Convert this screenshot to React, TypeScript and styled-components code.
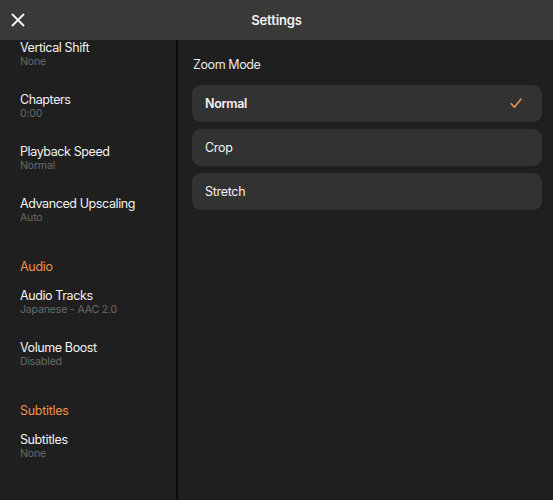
import * as React from 'react'
import styled, { createGlobalStyle } from 'styled-components'

const accent = '#ec9149'

const GlobalStyle = createGlobalStyle`
  html, body {
    margin: 0;
    padding: 0;
    background: #1f1f1f;
  }
  body {
    font-family: Inter, "Noto Sans", sans-serif;
    -webkit-font-smoothing: antialiased;
  }
`

const Window = styled.div`
  width: 553px;
  height: 500px;
  display: flex;
  flex-direction: column;
  background: #1f1f1f;
  overflow: hidden;
`

const Header = styled.header`
  height: 40px;
  flex: 0 0 40px;
  display: grid;
  grid-template-columns: 40px 1fr 40px;
  align-items: center;
  background: #3a3938;
`

const CloseButton = styled.button`
  width: 36px;
  height: 40px;
  display: flex;
  align-items: center;
  justify-content: center;
  padding: 0;
  border: none;
  background: none;
  color: #f2f2f2;
`

const Title = styled.h1`
  margin: 0;
  text-align: center;
  font-size: 13px;
  font-weight: 600;
  letter-spacing: -0.1px;
  color: #f4f4f4;
`

const Body = styled.div`
  flex: 1;
  display: grid;
  grid-template-columns: 176px 2px 1fr;
`

const Sidebar = styled.nav`
  display: flex;
  flex-direction: column;
  padding-left: 20px;
`

const Divider = styled.div`
  background: #0c0c0c;
`

const Item = styled.div`
  padding-bottom: 24px;
`

const ItemLabel = styled.div`
  font-size: 12.5px;
  line-height: 15px;
  letter-spacing: -0.4px;
  color: #f2f2f2;
`

const ItemValue = styled.div`
  font-size: 10.5px;
  line-height: 13px;
  letter-spacing: -0.15px;
  color: #6a6a6a;
`

const SectionHeader = styled.div`
  margin: 11px 0 14px;
  font-size: 12.5px;
  line-height: 15px;
  letter-spacing: -0.3px;
  color: ${accent};
`

const Panel = styled.section`
  padding: 17px 11px 0 14px;
  display: flex;
  flex-direction: column;
`

const PanelTitle = styled.div`
  font-size: 12.5px;
  line-height: 16px;
  letter-spacing: -0.4px;
  color: #e8e8e8;
  padding-left: 1px;
  margin-bottom: 12px;
`

const Options = styled.div`
  display: flex;
  flex-direction: column;
  gap: 7px;
`

const Option = styled.div<{ $selected?: boolean }>`
  height: 37px;
  display: flex;
  align-items: center;
  justify-content: space-between;
  padding: 0 20px 0 13px;
  border-radius: 9px;
  background: #323232;
  font-size: 12.5px;
  letter-spacing: -0.3px;
  font-weight: ${p => (p.$selected ? 600 : 400)};
  color: #f2f2f2;
`

const sections = [
  {
    header: null,
    items: [
      ['Vertical Shift', 'None'],
      ['Chapters', '0:00'],
      ['Playback Speed', 'Normal'],
      ['Advanced Upscaling', 'Auto'],
    ],
  },
  {
    header: 'Audio',
    items: [
      ['Audio Tracks', 'Japanese - AAC 2.0'],
      ['Volume Boost', 'Disabled'],
    ],
  },
  {
    header: 'Subtitles',
    items: [['Subtitles', 'None']],
  },
]

const modes = ['Normal', 'Crop', 'Stretch']

const CloseIcon = () => (
  <svg width="14" height="14" viewBox="0 0 14 14">
    <path d="M1.5 1.5 12.5 12.5 M12.5 1.5 1.5 12.5" stroke="currentColor" strokeWidth="2" strokeLinecap="round" />
  </svg>
)

const CheckIcon = () => (
  <svg width="12" height="11" viewBox="0 0 12 11">
    <path d="M1.2 5.8 4.4 9.3 10.8 1.2" stroke={accent} strokeWidth="1.7" fill="none" strokeLinecap="round" strokeLinejoin="round" />
  </svg>
)

export default function App() {
  const selected = 'Normal'

  return (
    <Window>
      <GlobalStyle />
      <Header>
        <CloseButton aria-label="Close">
          <CloseIcon />
        </CloseButton>
        <Title>Settings</Title>
        <span />
      </Header>
      <Body>
        <Sidebar>
          {sections.map((section, i) => (
            <React.Fragment key={i}>
              {section.header && <SectionHeader>{section.header}</SectionHeader>}
              {section.items.map(([label, value]) => (
                <Item key={label}>
                  <ItemLabel>{label}</ItemLabel>
                  <ItemValue>{value}</ItemValue>
                </Item>
              ))}
            </React.Fragment>
          ))}
        </Sidebar>
        <Divider />
        <Panel>
          <PanelTitle>Zoom Mode</PanelTitle>
          <Options>
            {modes.map(mode => (
              <Option key={mode} $selected={mode === selected}>
                <span>{mode}</span>
                {mode === selected && <CheckIcon />}
              </Option>
            ))}
          </Options>
        </Panel>
      </Body>
    </Window>
  )
}
